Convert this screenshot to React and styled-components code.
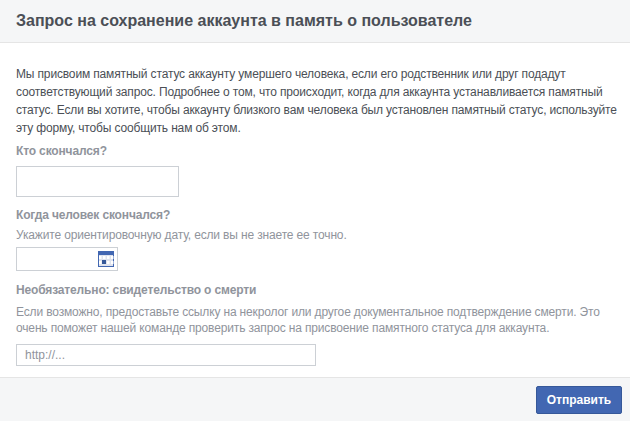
import React from "react";
import styled, { createGlobalStyle } from "styled-components";

const Global = createGlobalStyle`
  body { margin: 0; background: #fff; font-family: "Liberation Sans", Arial, sans-serif; }
`;

const Dialog = styled.div`
  width: 630px;
  height: 421px;
  display: flex;
  flex-direction: column;
`;

const Header = styled.div`
  height: 42px;
  background: #f5f6f7;
  border-bottom: 1px solid #e5e5e5;
  display: flex;
  align-items: center;
  padding: 0 16px;
  font-size: 16px;
  font-weight: bold;
  color: #4b4f56;
`;

const Body = styled.div`
  flex: 1;
  padding: 22px 4px 0 16px;
  color: #4b4f56;
  font-size: 12px;
  letter-spacing: -0.15px;
`;

const Intro = styled.p`
  margin: 0 0 6px;
  line-height: 18px;
`;

const Label = styled.div`
  font-weight: bold;
  color: #90949c;
  line-height: 16px;
  margin-bottom: ${p => p.$mb || 8}px;
`;

const Hint = styled.p`
  margin: 0 0 ${p => p.$mb || 8}px;
  color: #90949c;
  line-height: 16px;
`;

const Input = styled.input`
  display: block;
  box-sizing: border-box;
  width: ${p => p.$w}px;
  height: ${p => p.$h}px;
  border: 1px solid #ccd0d5;
  padding: 0 8px;
  font: 12px "Liberation Sans", Arial, sans-serif;
  color: #4b4f56;
  margin-bottom: ${p => p.$mb}px;
  &::placeholder { color: #90949c; }
`;

const DateBox = styled.div`
  box-sizing: border-box;
  width: 102px;
  height: 24px;
  border: 1px solid #ccd0d5;
  display: flex;
  align-items: center;
  justify-content: flex-end;
  padding-right: 3px;
  margin-bottom: 11px;
`;

const Footer = styled.div`
  height: 43px;
  background: #f5f6f7;
  border-top: 1px solid #e5e5e5;
  display: flex;
  align-items: center;
  justify-content: flex-end;
  padding: 0 8px;
`;

const Button = styled.button`
  width: 86px;
  height: 28px;
  background: #4267b2;
  border: 1px solid #365899;
  border-radius: 2px;
  color: #fff;
  font: bold 12px "Liberation Sans", Arial, sans-serif;
`;

const Calendar = () => (
  <svg width="16" height="16" viewBox="0 0 16 16">
    <rect x="0" y="0" width="16" height="16" fill="#dfe3ee" />
    <rect x="0" y="0" width="16" height="4" fill="#4267b2" />
    <rect x="0.5" y="0.5" width="15" height="15" fill="none" stroke="#4267b2" />
    {[5, 10].map(y => [1, 5, 9, 13].map(x => (
      <rect key={x + "-" + y} x={x} y={y} width="2.5" height="3" fill="#fff" />
    )))}
    <rect x="4" y="9" width="4" height="4" fill="#365899" />
  </svg>
);

export default function App() {
  return (
    <Dialog>
      <Global />
      <Header>Запрос на сохранение аккаунта в память о пользователе</Header>
      <Body>
        <Intro>
          Мы присвоим памятный статус аккаунту умершего человека, если его родственник или друг подадут<br />
          соответствующий запрос. Подробнее о том, что происходит, когда для аккаунта устанавливается памятный статус.
          Если вы хотите, чтобы аккаунту близкого вам человека был установлен памятный статус, используйте эту форму,
          чтобы сообщить нам об этом.
        </Intro>
        <Label $mb={7}>Кто скончался?</Label>
        <Input $w={163} $h={31} $mb={10} />
        <Label $mb={4}>Когда человек скончался?</Label>
        <Hint $mb={4}>Укажите ориентировочную дату, если вы не знаете ее точно.</Hint>
        <DateBox><Calendar /></DateBox>
        <Label $mb={6}>Необязательно: свидетельство о смерти</Label>
        <Hint>
          Если возможно, предоставьте ссылку на некролог или другое документальное подтверждение смерти. Это очень
          поможет нашей команде проверить запрос на присвоение памятного статуса для аккаунта.
        </Hint>
        <Input $w={300} $h={22} $mb={0} placeholder="http://..." />
      </Body>
      <Footer><Button>Отправить</Button></Footer>
    </Dialog>
  );
}
